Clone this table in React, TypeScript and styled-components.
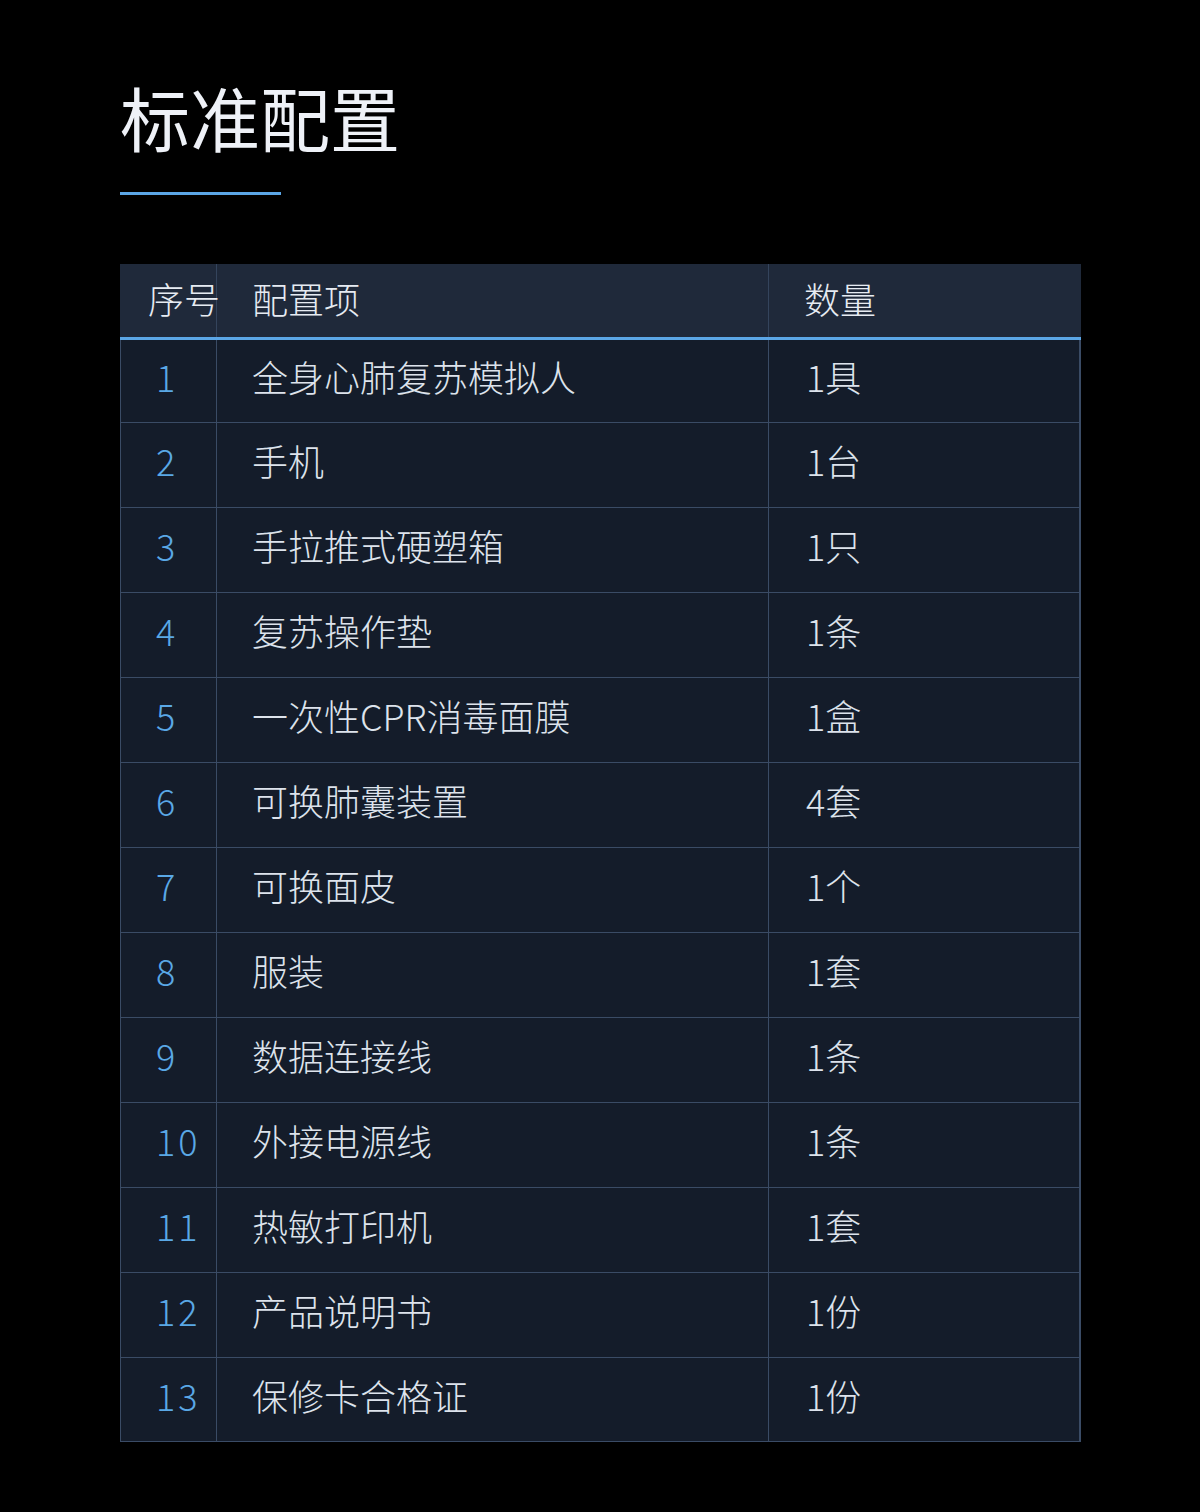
import React from "react";
import styled, { createGlobalStyle } from "styled-components";

const GlobalStyle = createGlobalStyle`
  html, body {
    margin: 0;
    padding: 0;
    background: #000000;
  }
  body {
    font-family: "Noto Sans CJK SC", "Noto Sans", sans-serif;
    -webkit-font-smoothing: antialiased;
  }
`;

const Page = styled.div`
  width: 1200px;
  min-height: 1512px;
  box-sizing: border-box;
  background: #000000;
  padding: 77px 120px 0 120px;
  display: flex;
  flex-direction: column;
`;

const Title = styled.h1`
  margin: 0;
  font-size: 70px;
  line-height: 80px;
  font-weight: 400;
  color: #eef1f7;
  letter-spacing: 0;
`;

const Underline = styled.div`
  width: 161px;
  height: 3px;
  background: #5ba6e6;
  margin-top: 35px;
`;

const Table = styled.div`
  margin-top: 69px;
  width: 961px;
  display: flex;
  flex-direction: column;
`;

const HeaderRow = styled.div`
  display: grid;
  grid-template-columns: 96px 553px 1fr;
  height: 73px;
  background: #1f293a;
  border-bottom: 3px solid #5ba6e6;
`;

const HeaderCell = styled.div<{ $pad: number; $divider?: boolean }>`
  display: flex;
  align-items: center;
  padding-left: ${(p) => p.$pad}px;
  padding-bottom: 6px;
  box-sizing: border-box;
  font-size: 36px;
  font-weight: 300;
  color: #e6ebf2;
  white-space: nowrap;
  border-left: ${(p) => (p.$divider ? "1px solid #34445c" : "none")};
  border-right: ${(p) => (p.$divider ? "1px solid #34445c" : "none")};
  position: relative;
  z-index: ${(p) => (p.$divider ? 0 : 1)};
`;

const Body = styled.div`
  display: flex;
  flex-direction: column;
  border-left: 1px solid #3a4b65;
  border-right: 2px solid #3a4b65;
  border-bottom: 1px solid #3a4b65;
  background: #141c2a;
`;

const Row = styled.div`
  display: grid;
  grid-template-columns: 96px 552px 1fr;
  height: 85px;
  box-sizing: border-box;
  border-bottom: 1px solid #3a4b65;
  &:first-child {
    height: 83px;
  }
  &:last-child {
    border-bottom: none;
    height: 83px;
  }
`;

const Cell = styled.div<{ $pad: number; $divider?: boolean }>`
  display: flex;
  align-items: center;
  padding-left: ${(p) => p.$pad}px;
  padding-bottom: 10px;
  box-sizing: border-box;
  font-size: 36px;
  font-weight: 300;
  color: #dde3ec;
  white-space: nowrap;
  border-right: ${(p) => (p.$divider ? "1px solid #3a4b65" : "none")};
`;

const NumCell = styled(Cell)`
  color: #5aa8e6;
  letter-spacing: 3px;
`;

const rows: [string, string][] = [
  ["全身心肺复苏模拟人", "1具"],
  ["手机", "1台"],
  ["手拉推式硬塑箱", "1只"],
  ["复苏操作垫", "1条"],
  ["一次性CPR消毒面膜", "1盒"],
  ["可换肺囊装置", "4套"],
  ["可换面皮", "1个"],
  ["服装", "1套"],
  ["数据连接线", "1条"],
  ["外接电源线", "1条"],
  ["热敏打印机", "1套"],
  ["产品说明书", "1份"],
  ["保修卡合格证", "1份"],
];

export default function App() {
  return (
    <>
      <GlobalStyle />
      <Page>
        <Title>标准配置</Title>
        <Underline />
        <Table>
          <HeaderRow>
            <HeaderCell $pad={28}>序号</HeaderCell>
            <HeaderCell $pad={35} $divider>
              配置项
            </HeaderCell>
            <HeaderCell $pad={35}>数量</HeaderCell>
          </HeaderRow>
          <Body>
            {rows.map(([name, qty], i) => (
              <Row key={i}>
                <NumCell $pad={35} $divider>
                  {i + 1}
                </NumCell>
                <Cell $pad={35} $divider>
                  {name}
                </Cell>
                <Cell $pad={37}>{qty}</Cell>
              </Row>
            ))}
          </Body>
        </Table>
      </Page>
    </>
  );
}
